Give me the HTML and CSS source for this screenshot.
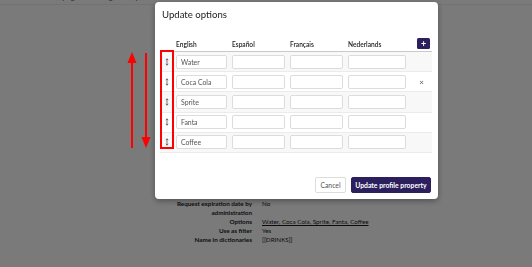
FILE: index.html
```html
<!DOCTYPE html>
<html>
<head>
<meta charset="utf-8">
<link rel="stylesheet" href="styles.css">
</head>
<body>
<div class="page">
  <nav class="topnav">
    <span>Customers</span><span>Campaigns</span><span>Messages</span><span>Exports</span>
  </nav>
  <dl class="props">
    <dt>Request expiration date by administration</dt><dd>No</dd>
    <dt>Options</dt><dd><a>Water, Coca Cola, Sprite, Fanta, Coffee</a></dd>
    <dt>Use as filter</dt><dd>Yes</dd>
    <dt>Name in dictionaries</dt><dd>[[DRINKS]]</dd>
  </dl>
</div>
<div class="overlay"></div>
<div class="modal">
  <h2 class="title">Update options</h2>
  <div class="table">
    <div class="row head">
      <span></span><span>English</span><span>Español</span><span>Français</span><span>Nederlands</span>
      <span class="addcell"><button class="add">+</button></span>
    </div>
    <div class="row">
      <span class="handle"><svg width="4" height="8" viewBox="0 0 4 8"><path d="M2 0.8V7.2M0.8 2.2L2 0.8L3.2 2.2M0.8 5.8L2 7.2L3.2 5.8" stroke="#555" stroke-width="0.8" fill="none"/></svg></span>
      <input value="Water"><input><input><input><span></span>
    </div>
    <div class="row">
      <span class="handle"><svg width="4" height="8" viewBox="0 0 4 8"><path d="M2 0.8V7.2M0.8 2.2L2 0.8L3.2 2.2M0.8 5.8L2 7.2L3.2 5.8" stroke="#555" stroke-width="0.8" fill="none"/></svg></span>
      <input value="Coca Cola"><input><input><input><span class="del">×</span>
    </div>
    <div class="row">
      <span class="handle"><svg width="4" height="8" viewBox="0 0 4 8"><path d="M2 0.8V7.2M0.8 2.2L2 0.8L3.2 2.2M0.8 5.8L2 7.2L3.2 5.8" stroke="#555" stroke-width="0.8" fill="none"/></svg></span>
      <input value="Sprite"><input><input><input><span></span>
    </div>
    <div class="row">
      <span class="handle"><svg width="4" height="8" viewBox="0 0 4 8"><path d="M2 0.8V7.2M0.8 2.2L2 0.8L3.2 2.2M0.8 5.8L2 7.2L3.2 5.8" stroke="#555" stroke-width="0.8" fill="none"/></svg></span>
      <input value="Fanta"><input><input><input><span></span>
    </div>
    <div class="row">
      <span class="handle"><svg width="4" height="8" viewBox="0 0 4 8"><path d="M2 0.8V7.2M0.8 2.2L2 0.8L3.2 2.2M0.8 5.8L2 7.2L3.2 5.8" stroke="#555" stroke-width="0.8" fill="none"/></svg></span>
      <input value="Coffee"><input><input><input><span></span>
    </div>
  </div>
  <div class="footer">
    <button class="btn cancel">Cancel</button>
    <button class="btn primary">Update profile property</button>
  </div>
</div>
<div class="annot-box"></div>
<svg class="annot-arrows" width="30" height="100" viewBox="0 0 30 100">
  <path d="M7 97V8" stroke="#f00" stroke-width="2" fill="none"/>
  <path d="M2.5 12L7 1L11.5 12Z" fill="#f00"/>
  <path d="M21 2V90" stroke="#f00" stroke-width="2" fill="none"/>
  <path d="M16.5 86L21 97L25.5 86Z" fill="#f00"/>
</svg>
</body>
</html>
```
FILE: styles.css
```css
* { box-sizing: border-box; }
html, body { margin: 0; padding: 0; }
body {
  width: 532px; height: 267px; overflow: hidden;
  font-family: Lato, "Open Sans", sans-serif;
  background: #fff;
  position: relative;
}
.topnav {
  display: flex; gap: 10px; font-size: 6.5px; color: #333;
  padding: 0 0 0 9px; height: 11px; margin-top: -6px; line-height: 8px;
  border-bottom: 1px solid #eee;
}
.props {
  display: grid; grid-template-columns: 252px 1fr; column-gap: 10px;
  margin: 194px 0 0 0; font-size: 6.3px; line-height: 9px; color: #1a1a1a;
}
.props dt { text-align: right; font-weight: 700; padding-left: 172px; }
.props dd { margin: 0; }
.props a { text-decoration: underline; }
.overlay {
  position: fixed; inset: 0; background: rgba(0,0,0,0.52);
}
.modal {
  position: fixed; left: 155px; top: 2px; width: 283px; height: 197px;
  background: #fff; border-radius: 4px;
  box-shadow: 0 2px 6px rgba(0,0,0,0.35);
  padding: 6px 6px 6px 5px;
  display: flex; flex-direction: column;
}
.title {
  margin: 0 0 0 2px; font-size: 9.6px; font-weight: 400; line-height: 14px; color: #222;
}
.table { margin-top: 14px; }
.row {
  display: grid;
  grid-template-columns: 11px 51px 53px 53px 58px 21px;
  column-gap: 5px;
  align-items: center;
  height: 20.2px;
  border-bottom: 1px solid #ebebeb;
}
.row:nth-child(even) { background: #f8f8f8; }
.row.head {
  height: 16px; font-size: 6.6px; color: #222; font-weight: 600;
  border-bottom: 1px solid #c9c9c9; background: #fff;
}
.handle { display: flex; justify-content: center; padding-left: 3px; }
.addcell { display: flex; justify-content: flex-end; padding-right: 2px; }
.add {
  width: 13px; height: 11px; border: 0; border-radius: 1.5px; padding: 0;
  background: #2b1f5e; color: #fff; font-size: 9px; line-height: 11px;
  font-family: Lato, sans-serif; font-weight: 700;
}
input {
  height: 14px; width: 100%; border: 1px solid #dcdcdc; border-radius: 2px;
  background: #fff; font-family: Lato, sans-serif; font-size: 6.9px; color: #555;
  padding: 0 4px; margin: 0; outline: none;
}
.del { text-align: center; font-size: 8px; color: #555; }
.footer {
  margin-top: auto; display: flex; justify-content: flex-end; gap: 5px; padding-right: 1px;
}
.btn {
  height: 16px; border-radius: 2px; font-family: Lato, sans-serif; font-size: 6.8px;
  padding: 0; margin: 0;
}
.cancel { width: 31px; background: #fff; border: 1px solid #ddd; color: #555; }
.primary { width: 80px; background: #2b1f5e; border: 1px solid #2b1f5e; color: #fff; font-weight: 700; }
.annot-box {
  position: absolute; left: 160px; top: 50px; width: 14px; height: 99px;
  border: 2px solid #f00;
}
.annot-arrows { position: absolute; left: 125px; top: 51px; }
```
